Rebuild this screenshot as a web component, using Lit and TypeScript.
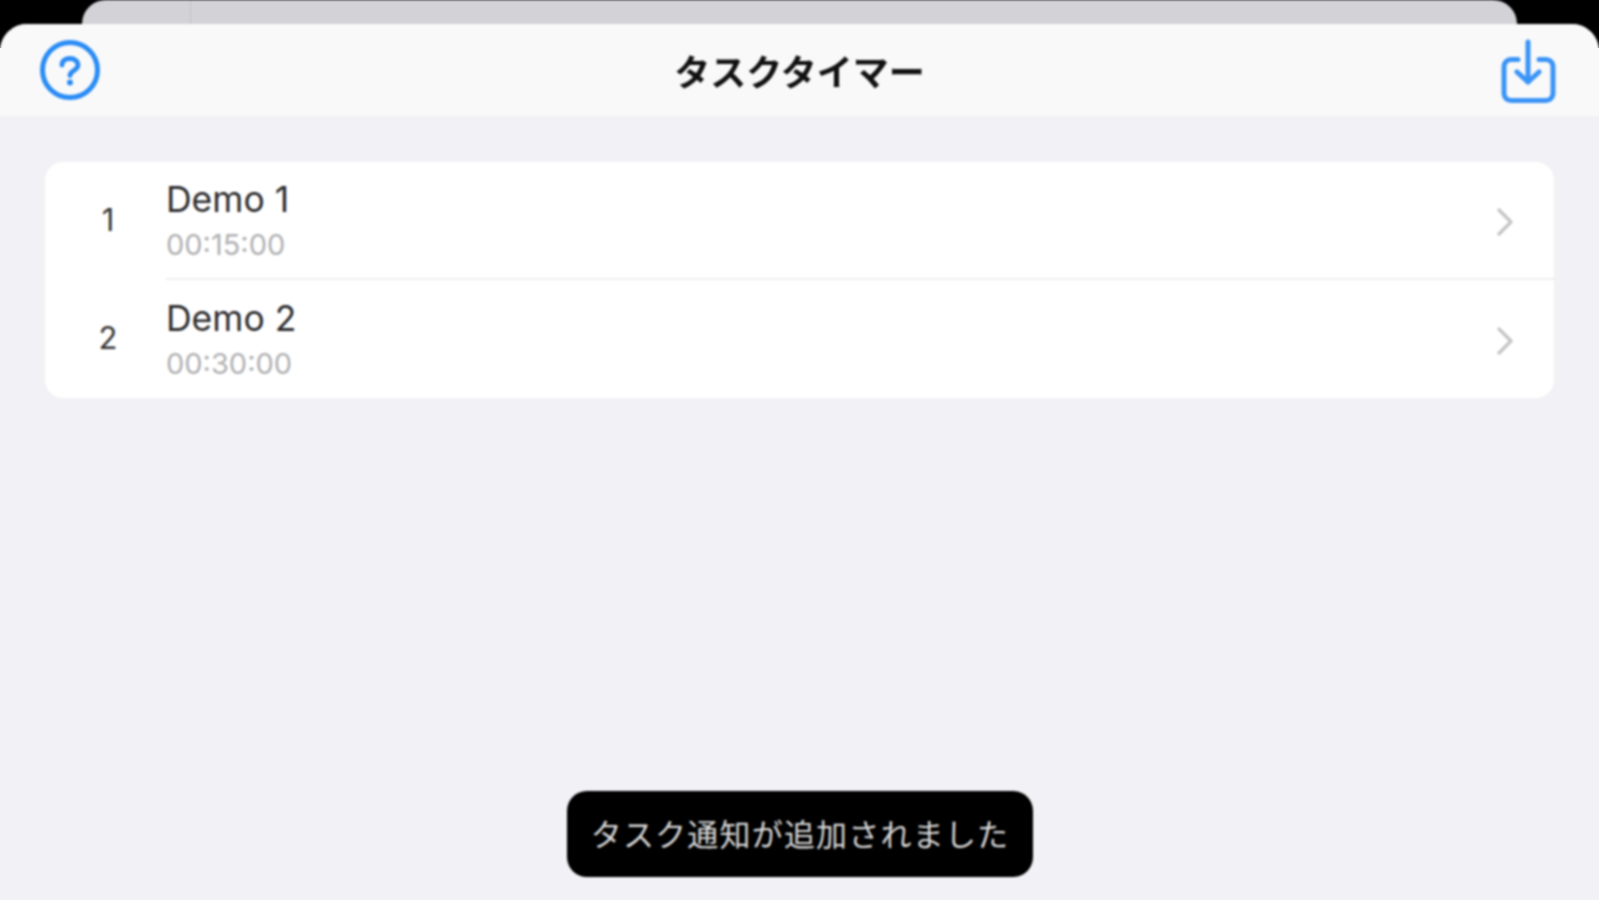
import { LitElement, html, css } from "lit";
import { customElement } from "lit/decorators.js";

const tasks = [
  { n: 1, name: "Demo 1", time: "00:15:00" },
  { n: 2, name: "Demo 2", time: "00:30:00" },
];

@customElement("app-root")
export class AppRoot extends LitElement {
  static styles = css`
    :host {
      display: block;
      width: 1599px;
      height: 900px;
      overflow: hidden;
      background: linear-gradient(#000 0 48px, #f9f9f9 48px 116px, #f1f1f6 116px);
      font-family: "Inter", "Liberation Sans", "Noto Sans CJK JP", sans-serif;
    }
    .frame {
      width: 1599px;
      height: 900px;
      display: flex;
      flex-direction: column;
      filter: blur(0.9px);
    }
    .peek {
      height: 24px;
      flex: none;
      padding: 0 82px;
      box-sizing: border-box;
    }
    .back {
      height: 24px;
      background: #d2d2d7;
      border-radius: 24px 24px 0 0;
      padding-left: 108px;
      box-sizing: border-box;
    }
    .back i {
      display: block;
      width: 1px;
      height: 24px;
      background: #c4c4c8;
    }
    .sheet {
      flex: 1;
      position: relative;
      display: flex;
      flex-direction: column;
      background: #f1f1f6;
      border-radius: 27px 27px 0 0;
      overflow: hidden;
    }
    .nav {
      height: 92px;
      flex: none;
      background: #f9f9f9;
      display: flex;
      align-items: center;
      justify-content: space-between;
      padding: 0 43px 0 40px;
    }
    .nav svg { display: block; }
    .title {
      font-family: "Noto Sans CJK JP", sans-serif;
      font-size: 36px;
      font-weight: 700;
      color: #111;
      line-height: 1;
      position: absolute;
      left: 0;
      right: 0;
      top: 28px;
      text-align: center;
    }
    .list {
      margin: 46px 45px 0;
      background: #fff;
      border-radius: 18px;
      overflow: hidden;
    }
    .row {
      display: flex;
      align-items: stretch;
      height: 118px;
      padding-left: 42px;
    }
    .num {
      width: 42px;
      align-self: center;
      text-align: center;
      font-size: 31px;
      line-height: 36px;
      color: #333;
      margin-right: 37px;
      padding-bottom: 2px;
    }
    .body {
      flex: 1;
      display: flex;
      align-items: center;
      justify-content: space-between;
      padding-right: 41px;
    }
    .row:first-child .body { border-bottom: 2px solid #efeff1; }
    .labels { padding-top: 3px; }
    .name {
      font-size: 35.500px;
      line-height: 40px;
      color: #2b2b2d;
    }
    .time {
      font-size: 29px;
      line-height: 36px;
      margin-top: 7px;
      color: #b0b0b3;
    }
    .chev { margin-top: 3px; }
    .toast {
      position: absolute;
      left: 567px;
      bottom: 23px;
      width: 466px;
      height: 86px;
      box-sizing: border-box;
      padding-bottom: 3px;
      background: #000;
      border-radius: 20px;
      display: flex;
      align-items: center;
      justify-content: center;
      font-family: "Noto Sans CJK JP", sans-serif;
      font-size: 31px;
      letter-spacing: 1.2px;
      color: #d8d8d8;
      white-space: nowrap;
    }
  `;

  render() {
    return html`
      <div class="frame">
        <div class="peek"><div class="back"><i></i></div></div>
        <div class="sheet">
          <div class="nav">
            <svg width="60" height="60" viewBox="0 0 60 60" fill="none" stroke="#2a8cf5">
              <circle cx="30" cy="30" r="27.500" stroke-width="5"></circle>
              <path d="M22 25c0-4 3.500-6.500 8-6.500s8 2.800 8 6.500c0 5.500-8 5.500-8 10.500" stroke-width="4.800" stroke-linecap="round"></path>
              <circle cx="30" cy="42.500" r="3" fill="#2a8cf5" stroke="none"></circle>
            </svg>
            <div class="title">タスクタイマー</div>
            <svg width="56" height="66" viewBox="0 0 56 66" fill="none" stroke="#3a94f7" stroke-width="5" stroke-linecap="round" stroke-linejoin="round">
              <path d="M18 22.500H11a7 7 0 0 0-7 7v27a7 7 0 0 0 7 7h35a7 7 0 0 0 7-7v-27a7 7 0 0 0-7-7h-7"></path>
              <path d="M28 5v40"></path>
              <path d="M17 35l11 10 11-10"></path>
            </svg>
          </div>
          <div class="list">
            ${tasks.map(
              (t) => html`
                <div class="row">
                  <div class="num">${t.n}</div>
                  <div class="body">
                    <div class="labels">
                      <div class="name">${t.name}</div>
                      <div class="time">${t.time}</div>
                    </div>
                    <svg class="chev" width="16" height="28" viewBox="0 0 16 28" fill="none" stroke="#c4c4c7" stroke-width="3.200" stroke-linecap="round" stroke-linejoin="round">
                      <path d="M2 2l12 12L2 26"></path>
                    </svg>
                  </div>
                </div>
              `
            )}
          </div>
          <div class="toast">タスク通知が追加されました</div>
        </div>
      </div>
    `;
  }
}
